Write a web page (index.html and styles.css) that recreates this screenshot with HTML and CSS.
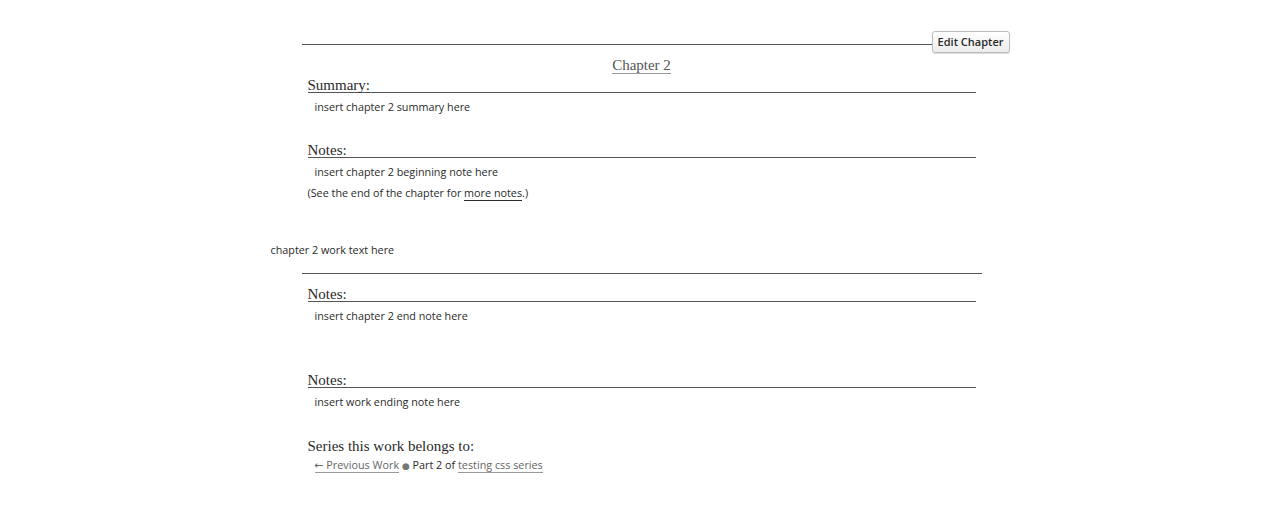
FILE: index.html
```html
<!DOCTYPE html>
<html>
<head>
<meta charset="utf-8">
<link rel="stylesheet" href="styles.css">
</head>
<body>
<div class="work">
  <div class="chapter">
    <div class="preface preface-top">
      <a class="edit-btn" href="#">Edit Chapter</a>
      <h3 class="title"><a href="#">Chapter 2</a></h3>
      <div class="module">
        <h3 class="heading">Summary:</h3>
        <blockquote class="userstuff">insert chapter 2 summary here</blockquote>
      </div>
      <div class="module notes-module">
        <h3 class="heading">Notes:</h3>
        <blockquote class="userstuff">insert chapter 2 beginning note here</blockquote>
        <p class="jump">(See the end of the chapter for <a href="#">more notes</a>.)</p>
      </div>
    </div>
    <div class="userstuff worktext">chapter 2 work text here</div>
    <div class="preface preface-end">
      <div class="module">
        <h3 class="heading">Notes:</h3>
        <blockquote class="userstuff">insert chapter 2 end note here</blockquote>
      </div>
    </div>
  </div>
  <div class="afterword">
    <div class="module">
      <h3 class="heading">Notes:</h3>
      <blockquote class="userstuff">insert work ending note here</blockquote>
    </div>
    <div class="series">
      <h3 class="series-heading">Series this work belongs to:</h3>
      <p class="series-line"><a class="gray" href="#">← Previous Work</a> <span class="dot">●</span> Part 2 of <a class="gray" href="#">testing css series</a></p>
    </div>
  </div>
</div>
</body>
</html>
```
FILE: styles.css
```css
html, body {
  margin: 0;
  padding: 0;
  background: #fff;
}
body {
  font-family: "Open Sans", "DejaVu Sans", sans-serif;
  font-size: 10.8px;
  color: #2a2a2a;
}
.work {
  width: 740px;
  margin: 0 auto;
  padding-top: 44px;
  padding-left: 1px;
}
a { color: #2a2a2a; text-decoration: none; }
.chapter { position: relative; }
.preface {
  margin: 0 29px 0 31px;
  border-top: 1px solid #555;
}
.edit-btn {
  position: absolute;
  top: -13px;
  right: 1px;
  display: block;
  padding: 2px 5px;
  height: 16px;
  line-height: 16px;
  font-size: 11px;
  font-weight: 600;
  color: #2a2a2a;
  background: linear-gradient(#fff 0%, #ececec 100%);
  border: 1px solid #bbb;
  border-radius: 3px;
  box-shadow: 0 1px 1px rgba(0,0,0,0.15);
}
.title {
  margin: 11px 0 0;
  text-align: center;
  font-family: "Liberation Serif", "DejaVu Serif", serif;
  font-weight: normal;
  font-size: 15px;
  line-height: 18px;
}
.title a {
  color: #555;
  border-bottom: 1px solid #999;
}
.module {
  margin: 0 6px;
}
.heading {
  margin: 0;
  padding-top: 4px;
  font-family: "Liberation Serif", "DejaVu Serif", serif;
  font-weight: normal;
  font-size: 15px;
  line-height: 14px;
  border-bottom: 1px solid #555;
}
.userstuff {
  margin: 6px 0 0 7px;
  line-height: 16px;
}
.notes-module { margin-top: 24px; }
.jump {
  margin: 5px 0 0;
  line-height: 16px;
}
.jump a { border-bottom: 1px solid #2a2a2a; }
.worktext {
  margin: 41px 0 0 0;
  line-height: 16px;
}
.preface-end {
  margin-top: 15px;
  padding-top: 9px;
}
.afterword { margin: 0 29px 0 31px; }
.afterword .module { margin-top: 45px; }
.series { margin: 26px 6px 0; }
.series-heading {
  margin: 0;
  padding-top: 2px;
  font-family: "Liberation Serif", "DejaVu Serif", serif;
  font-weight: normal;
  font-size: 15px;
  line-height: 16px;
}
.series-line {
  margin: 3px 0 0 7px;
  line-height: 16px;
}
.gray { color: #666; border-bottom: 1px solid #999; }
.dot { color: #777; font-size: 9px; }
```
